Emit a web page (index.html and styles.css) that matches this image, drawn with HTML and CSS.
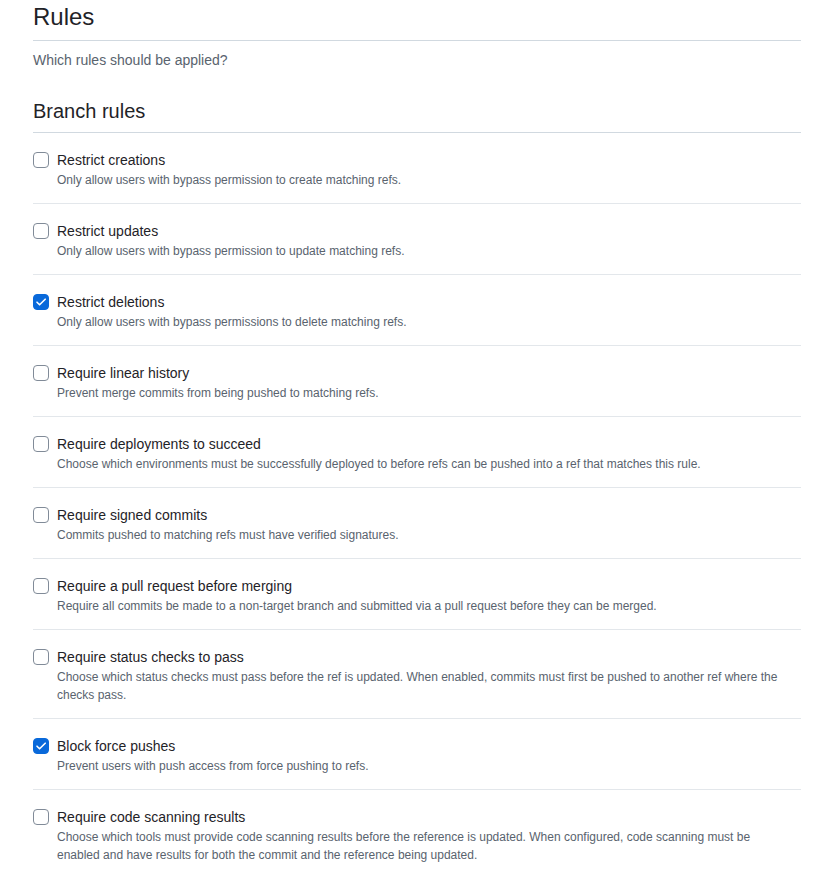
FILE: index.html
```html
<!DOCTYPE html>
<html>
<head>
<meta charset="utf-8">
<link rel="stylesheet" href="styles.css">
</head>
<body>
<div class="page">
  <div class="subhead">
    <h2 class="subhead-title">Rules</h2>
  </div>
  <p class="subhead-desc">Which rules should be applied?</p>

  <div class="section-head">
    <h3 class="section-title">Branch rules</h3>
  </div>

  <ul class="rules">
    <li class="rule">
      <span class="cb"></span>
      <div class="rule-text">
        <div class="rule-title">Restrict creations</div>
        <div class="rule-desc">Only allow users with bypass permission to create matching refs.</div>
      </div>
    </li>
    <li class="rule">
      <span class="cb"></span>
      <div class="rule-text">
        <div class="rule-title">Restrict updates</div>
        <div class="rule-desc">Only allow users with bypass permission to update matching refs.</div>
      </div>
    </li>
    <li class="rule">
      <span class="cb checked"><svg viewBox="0 0 16 16" width="16" height="16"><path d="M4 8.2l2.6 2.6L12.2 5.2" fill="none" stroke="#fff" stroke-width="1.6" stroke-linecap="round" stroke-linejoin="round"/></svg></span>
      <div class="rule-text">
        <div class="rule-title">Restrict deletions</div>
        <div class="rule-desc">Only allow users with bypass permissions to delete matching refs.</div>
      </div>
    </li>
    <li class="rule">
      <span class="cb"></span>
      <div class="rule-text">
        <div class="rule-title">Require linear history</div>
        <div class="rule-desc">Prevent merge commits from being pushed to matching refs.</div>
      </div>
    </li>
    <li class="rule">
      <span class="cb"></span>
      <div class="rule-text">
        <div class="rule-title">Require deployments to succeed</div>
        <div class="rule-desc">Choose which environments must be successfully deployed to before refs can be pushed into a ref that matches this rule.</div>
      </div>
    </li>
    <li class="rule">
      <span class="cb"></span>
      <div class="rule-text">
        <div class="rule-title">Require signed commits</div>
        <div class="rule-desc">Commits pushed to matching refs must have verified signatures.</div>
      </div>
    </li>
    <li class="rule">
      <span class="cb"></span>
      <div class="rule-text">
        <div class="rule-title">Require a pull request before merging</div>
        <div class="rule-desc">Require all commits be made to a non-target branch and submitted via a pull request before they can be merged.</div>
      </div>
    </li>
    <li class="rule">
      <span class="cb"></span>
      <div class="rule-text">
        <div class="rule-title">Require status checks to pass</div>
        <div class="rule-desc">Choose which status checks must pass before the ref is updated. When enabled, commits must first be pushed to another ref where the checks pass.</div>
      </div>
    </li>
    <li class="rule">
      <span class="cb checked"><svg viewBox="0 0 16 16" width="16" height="16"><path d="M4 8.2l2.6 2.6L12.2 5.2" fill="none" stroke="#fff" stroke-width="1.6" stroke-linecap="round" stroke-linejoin="round"/></svg></span>
      <div class="rule-text">
        <div class="rule-title">Block force pushes</div>
        <div class="rule-desc">Prevent users with push access from force pushing to refs.</div>
      </div>
    </li>
    <li class="rule">
      <span class="cb"></span>
      <div class="rule-text">
        <div class="rule-title">Require code scanning results</div>
        <div class="rule-desc">Choose which tools must provide code scanning results before the reference is updated. When configured, code scanning must be enabled and have results for both the commit and the reference being updated.</div>
      </div>
    </li>
  </ul>
</div>
</body>
</html>
```

FILE: styles.css
```css
html, body {
  margin: 0;
  padding: 0;
  background: #ffffff;
}

body {
  font-family: "Liberation Sans", Arial, sans-serif;
  color: #1f2328;
}

.page {
  width: 768px;
  margin-left: 33px;
  padding-top: 2px;
}

.subhead {
  border-bottom: 1px solid #d1d9e0;
  padding-bottom: 8px;
}

.subhead-title {
  margin: 0;
  font-size: 24px;
  line-height: 30px;
  font-weight: 400;
}

.subhead-desc {
  margin: 9px 0 0;
  font-size: 14px;
  line-height: 21px;
  color: #59636e;
}

.section-head {
  margin-top: 25px;
  border-bottom: 1px solid #d1d9e0;
  padding-bottom: 6px;
}

.section-title {
  margin: 0;
  font-size: 20px;
  line-height: 30px;
  font-weight: 400;
}

.rules {
  list-style: none;
  margin: 0;
  padding: 0;
}

.rule {
  display: flex;
  align-items: flex-start;
  gap: 8px;
  padding: 17px 0 14px;
  border-bottom: 1px solid #e3e7eb;
}

.cb {
  flex: none;
  width: 16px;
  height: 16px;
  margin-top: 2px;
  box-sizing: border-box;
  border: 1px solid #818b98;
  border-radius: 4px;
  background: #ffffff;
  display: flex;
}

.cb.checked {
  background: #0969da;
  border-color: #0969da;
}

.cb svg {
  margin: -1px;
}

.rule-text {
  flex: 1;
  min-width: 0;
  padding-right: 16px;
}

.rule-title {
  font-size: 14px;
  line-height: 21px;
  color: #1f2328;
}

.rule-desc {
  font-size: 12px;
  line-height: 18px;
  color: #59636e;
}
```
